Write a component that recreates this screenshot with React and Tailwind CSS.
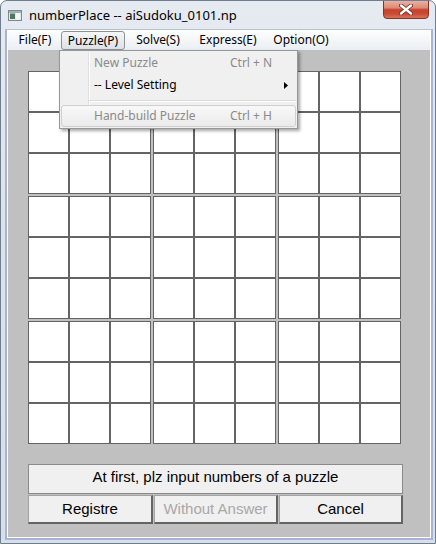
import React from "react";

function TitleIcon() {
  return (
    <svg width="14" height="11" viewBox="0 0 14 11">
      <rect x="0.5" y="0.5" width="13" height="10" fill="#e4e8ea" stroke="#7d8a90" />
      <rect x="1" y="1" width="12" height="2" fill="#9fb0b8" />
      <rect x="2" y="3.5" width="5" height="5.5" fill="#4f7563" />
      <rect x="8" y="3.5" width="4" height="5.5" fill="#f4f6f6" />
    </svg>
  );
}

function CloseButton() {
  return (
    <div className="ml-auto mr-[6px] -mt-[1px] self-start w-[46px] h-[19px] rounded-b-[4px] border border-[#80342a] bg-[linear-gradient(#eab1a2_0%,#dd8a75_40%,#c7412c_52%,#c94a34_75%,#d9735a_100%)] flex items-center justify-center">
      <svg width="14" height="11" viewBox="0 0 14 11">
        <path d="M2 1.5 L12 9.5 M12 1.5 L2 9.5" stroke="#6b2a22" strokeWidth="4" strokeLinecap="round" />
        <path d="M2 1.5 L12 9.5 M12 1.5 L2 9.5" stroke="#ffffff" strokeWidth="2.4" strokeLinecap="round" />
      </svg>
    </div>
  );
}

function MenuBar() {
  return (
    <div className="h-[20px] flex items-stretch bg-[linear-gradient(#fefefe,#eaeef4)] font-['Noto_Sans',sans-serif] text-[12px] text-black">
      <div className="ml-[1px] w-[52px] flex items-center justify-center">File(F)</div>
      <div className="w-[64px] mt-[1px] h-[19px] flex items-center justify-center rounded-[3px] border border-[#8e9196] bg-[linear-gradient(#f4f6f8,#dde2e8)]">
        Puzzle(P)
      </div>
      <div className="w-[66px] flex items-center justify-center">Solve(S)</div>
      <div className="w-[74px] flex items-center justify-center">Express(E)</div>
      <div className="w-[72px] flex items-center justify-center">Option(O)</div>
    </div>
  );
}

function Dropdown() {
  return (
    <div className="absolute left-[58px] top-[49px] w-[239px] border border-[#979797] bg-[#f0f0f0] shadow-[2px_2px_3px_rgba(0,0,0,0.35)] font-['Noto_Sans',sans-serif] text-[12px]">
      <div className="relative p-[1px]">
        <div className="absolute left-[28px] top-[1px] bottom-[1px] w-[2px] border-l border-[#e0e0e0] border-r border-r-white" />
        <div className="relative h-[22px] flex items-center pl-[33px] text-[#8a8a8a]">
          <span className="w-[136px]">New Puzzle</span>
          <span>Ctrl + N</span>
        </div>
        <div className="relative h-[22px] flex items-center pl-[33px] text-black">
          <span className="w-[136px]">-- Level Setting</span>
          <span className="ml-auto mr-[8px]">
            <svg width="4" height="7" viewBox="0 0 4 7">
              <polygon points="0,0 4,3.5 0,7" fill="#000" />
            </svg>
          </span>
        </div>
        <div className="relative h-[9px] flex items-center pl-[28px]">
          <div className="w-full h-[2px] border-t border-[#dcdcdc] border-b border-b-white" />
        </div>
        <div className="relative h-[22px] flex items-center pl-[32px] text-[#8a8a8a] rounded-[3px] border border-[#cfcfcf] bg-[linear-gradient(#f8f8f8,#ebebeb)]">
          <span className="w-[136px]">Hand-build Puzzle</span>
          <span>Ctrl + H</span>
        </div>
      </div>
    </div>
  );
}

function Board() {
  const nine = Array.from({ length: 9 });
  return (
    <div className="grid grid-cols-3 gap-[2px] w-[373px]">
      {nine.map((_, b) => (
        <div key={b} className="grid grid-cols-3">
          {nine.map((_, c) => (
            <div key={c} className="w-[41px] h-[41px] border border-[#646464] bg-white" />
          ))}
        </div>
      ))}
    </div>
  );
}

function Btn({ children, disabled }) {
  return (
    <div
      className={
        "h-[29px] flex items-center justify-center bg-[#f0f0f0] border-t border-l border-r-2 border-b-2 border-t-[#a3a3a3] border-l-[#a3a3a3] border-r-[#646464] border-b-[#646464] " +
        (disabled ? "text-[#a8a8a8]" : "text-black")
      }
    >
      {children}
    </div>
  );
}

export default function App() {
  return (
    <div className="relative w-[436px] h-[544px] overflow-hidden rounded-t-[7px] border border-[#6f7d8f] bg-[linear-gradient(#e6ebf2,#dbe3ed_40%,#d7dfea)] flex flex-col">
      <div className="h-[28px] flex items-center shrink-0">
        <div className="ml-[7px] flex items-center">
          <TitleIcon />
        </div>
        <div className="ml-[7px] font-['Noto_Sans',sans-serif] text-[13px] text-black leading-none">
          numberPlace -- aiSudoku_0101.np
        </div>
        <CloseButton />
      </div>
      <div className="flex-1 ml-[4px] mr-[2px] mb-[3px] flex flex-col border-t border-t-[#b8c2cf] border-l-2 border-r-2 border-b-2 border-l-[#a9b3d6] border-r-[#a9b3d6] border-b-[#a9b3d6]">
        <div className="flex-1 flex flex-col border-l border-r border-b border-white">
          <MenuBar />
          <div className="flex-1 bg-[#c0c0c0] pl-[20px] pt-[21px] flex flex-col">
            <Board />
            <div className="mt-[20px] w-[375px] h-[30px] border border-[#8a8a8a] bg-[#f0f0f0] flex items-center justify-center pb-[3px] font-['Liberation_Sans',Arial,sans-serif] text-[15px] text-black">
              At first, plz input numbers of a puzzle
            </div>
            <div className="mt-[1px] w-[375px] grid grid-cols-[125px_124px_124px] gap-[1px] font-['Liberation_Sans',Arial,sans-serif] text-[15px]">
              <Btn>Registre</Btn>
              <Btn disabled>Without Answer</Btn>
              <Btn>Cancel</Btn>
            </div>
          </div>
        </div>
      </div>
      <Dropdown />
    </div>
  );
}
